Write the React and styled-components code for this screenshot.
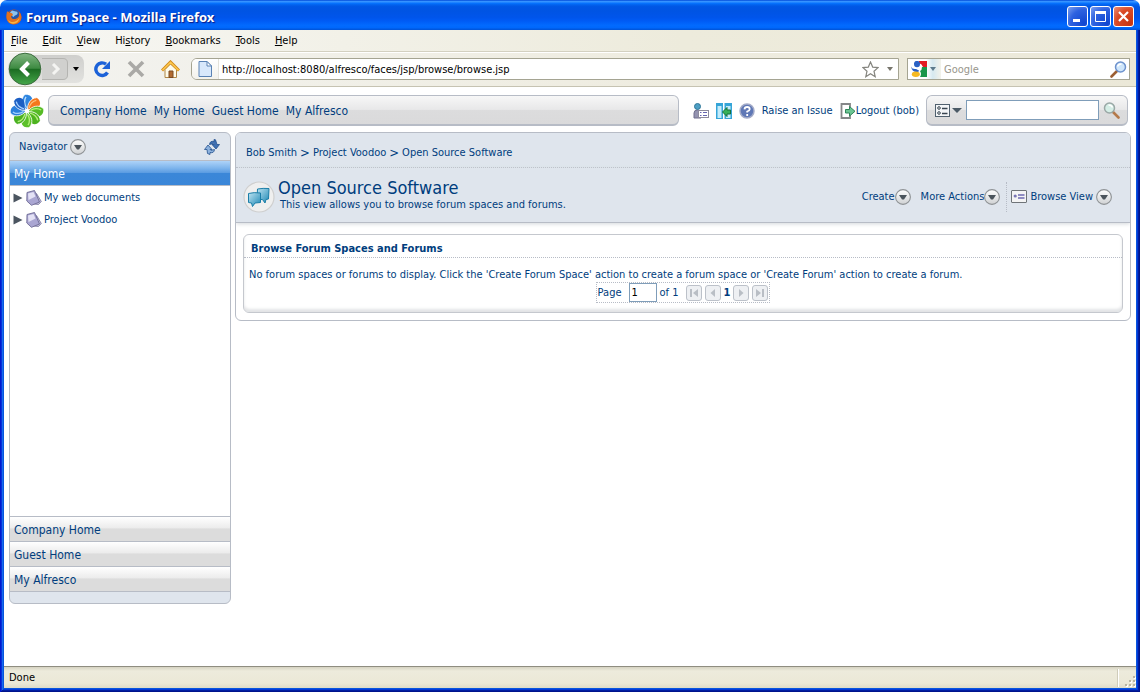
import React from "react";
import styled, { createGlobalStyle } from "styled-components";

const ui = `"DejaVu Sans Condensed", "Noto Sans", sans-serif`;
const navy = "#003d7d";
const line = "#b7bcc6";
const mist = "#dfe5ed";
const silver = "linear-gradient(#f7f7f7 0, #e8e8e9 48%, #dcdcdd 52%, #dadadb 100%)";

const GlobalStyle = createGlobalStyle`
  *, *::before, *::after { box-sizing: border-box; }
  body { margin: 0; background: #fff; font: 11px/14px ${ui}; color: #000; }
  button, input { font: inherit; color: inherit; margin: 0; padding: 0; border: 0; background: none; border-radius: 0; outline: 0; }
  a { color: inherit; text-decoration: none; }
  h1, h2, p, ul, ol { margin: 0; padding: 0; list-style: none; font-size: inherit; }
  svg { display: block; flex: none; }
`;

/* Window frame */
const Window = styled.div`
  display: flex;
  flex-direction: column;
  min-height: 100vh;
`;
const TitleBar = styled.header`
  display: flex;
  align-items: center;
  height: 30px;
  padding: 3px 6px 0 6px;
  border-radius: 7px 7px 0 0;
  background: linear-gradient(#0048d8 0, #3593ff 5%, #1a80ff 9%, #036ffc 12%, #0262ee 16%, #0057e5 22%, #0054e3 36%, #0055eb 58%, #005bf5 70%, #026afe 84%, #0068fc 92%, #0052d6 100%);
`;
const WindowTitle = styled.div`
  flex: 1;
  margin-left: 4px;
  font: bold 13px/18px "Noto Sans", sans-serif;
  color: #fff;
  text-shadow: 1px 1px 1px #0a1883;
`;
const CaptionButtons = styled.div`
  display: flex;
  gap: 2px;
`;
const CaptionButton = styled.button`
  display: grid;
  place-items: center;
  width: 21px;
  height: 21px;
  border: 1px solid #fff;
  border-radius: 3px;
  background: ${(p) =>
    p.$close
      ? "radial-gradient(circle at 85% 85%, #c83510, #da4a26 60%, #ec9078)"
      : "radial-gradient(circle at 85% 85%, #1045d0, #2e62e0 60%, #7da0f0)"};
`;
const Frame = styled.div`
  flex: 1;
  display: flex;
  flex-direction: column;
  padding: 0 4px 4px;
  background: #fff;
  box-shadow: inset 1px 0 #0019cf, inset -1px -1px #00138c, inset 2px 0 #0831d9, inset -2px -2px #001ea0,
    inset 3px 0 #166aee, inset -3px -3px #0339d8, inset 4px 0 #0855dd, inset -4px -4px #0855dd;
`;

/* Browser chrome */
const MenuBar = styled.nav`
  display: flex;
  align-items: center;
  gap: 15px;
  height: 21px;
  padding-left: 7px;
  background: linear-gradient(90deg, #f7f7f4, #edebdc 60%, #ece9d8);
`;
const MenuItem = styled.button`
  line-height: 16px;
`;
const Toolbar = styled.div`
  display: flex;
  align-items: center;
  height: 36px;
  padding: 0 6px 0 4px;
  border-top: 1px solid #d3d0c0;
  border-bottom: 1px solid #c6c3b2;
  box-shadow: inset 0 1px #fff;
  background: linear-gradient(90deg, #f3f3f0, #efedE2 50%, #ebe8d8);
`;
const HistoryButtons = styled.div`
  display: flex;
  align-items: center;
  height: 28px;
  width: 76px;
  border-radius: 14px 8px 8px 14px;
  background: linear-gradient(#cfcfcd, #e2e2df);
`;
const IconButton = styled.button`
  display: grid;
  place-items: center;
  width: ${(p) => p.$w || 34}px;
  height: ${(p) => p.$h || 28}px;
`;
const LocationBar = styled.div`
  flex: 1;
  display: flex;
  align-items: center;
  height: 22px;
  margin: 0 8px 0 3px;
  border: 1px solid #a5a492;
  border-radius: 6px 0 0 6px;
  background: #fff;
`;
const SiteButton = styled.button`
  display: grid;
  place-items: center;
  width: 27px;
  height: 20px;
  border-right: 1px solid #e3e2da;
  border-radius: 5px 0 0 5px;
  background: linear-gradient(#fff, #f3f2ec);
`;
const TextField = styled.input`
  flex: 1;
  min-width: 0;
  padding: 2px 0 0 3px;
  line-height: 16px;
  &::placeholder { color: #98968c; opacity: 1; }
`;
const WebSearch = styled.div`
  display: flex;
  align-items: center;
  width: 223px;
  height: 22px;
  padding-right: 1px;
  border: 1px solid #a5a492;
  background: #fff;
`;
const EngineButton = styled.button`
  display: flex;
  align-items: center;
  gap: 3px;
  width: 33px;
  height: 20px;
  padding-left: 3px;
  background: linear-gradient(90deg, #fff 55%, #d6e9f0 75%, #f3f2ea);
`;
const StatusBar = styled.footer`
  display: flex;
  align-items: center;
  height: 22px;
  padding-left: 5px;
  border-top: 1px solid #8f8d80;
  background: linear-gradient(#d6d3c2 0, #edebdc 4px, #ebe8d7 16px, #dedbc8 100%);
`;
const StatusText = styled.span`
  flex: 1;
`;
const StatusGrip = styled.div`
  display: flex;
  align-items: flex-end;
  justify-content: flex-end;
  width: 18px;
  height: 18px;
  border-left: 1px solid #fff;
  box-shadow: -1px 0 #cfccba;
`;

/* Application */
const Page = styled.div`
  flex: 1;
  padding: 7px 5px 16px;
  color: ${navy};
`;
const TopRow = styled.div`
  display: flex;
  align-items: center;
  height: 33px;
  margin-bottom: 5px;
  padding: 0 3px 0 1px;
`;
const SilverBox = styled.div`
  display: flex;
  align-items: center;
  height: 31px;
  border: 1px solid ${line};
  border-bottom-width: 2px;
  border-radius: 6px;
  background: ${silver};
`;
const SiteNav = styled(SilverBox).attrs({ as: "nav" })`
  flex: 1;
  gap: 7px;
  margin-left: 4px;
  padding: 2px 0 0 11px;
  font-size: 12px;
`;
const Tools = styled.div`
  display: flex;
  align-items: center;
  gap: 7px;
  margin: 0 7px 0 14px;
`;
const IconLink = styled.a`
  display: flex;
  align-items: center;
  gap: ${(p) => p.$gap || 0}px;
`;
const SiteSearch = styled(SilverBox).attrs({ as: "form" })`
  gap: 4px;
  width: 202px;
  padding: 0 7px 0 8px;
`;
const SearchInput = styled.input`
  flex: 1;
  min-width: 0;
  height: 20px;
  padding: 0 3px;
  border: 1px solid #7f9db9;
  background: #fff;
`;
const PlainButton = styled.button`
  display: flex;
  align-items: center;
  gap: ${(p) => p.$gap || 0}px;
`;
const Columns = styled.div`
  display: flex;
  align-items: flex-start;
  gap: 4px;
`;

const Sidebar = styled.aside`
  width: 222px;
  border: 1px solid ${line};
  border-radius: 6px;
  overflow: hidden;
  background: ${mist};
`;
const SidebarHead = styled.div`
  display: flex;
  align-items: center;
  justify-content: space-between;
  height: 27px;
  padding: 0 10px 0 9px;
`;
const SectionButton = styled.button`
  display: block;
  width: 100%;
  height: 25px;
  padding: 1px 0 0 4px;
  border-top: 1px solid ${line};
  text-align: left;
  font-size: 12px;
  color: ${(p) => (p.$active ? "#fff" : navy)};
  background: ${(p) =>
    p.$active
      ? "linear-gradient(#aed3f8 0, #7db4ec 30%, #5c9de2 48%, #3b87d8 52%, #3a86d8 100%)"
      : "linear-gradient(#fff 0, #ececec 45%, #dcdcdc 50%, #dcdcdc 100%)"};
`;
const Tree = styled.ul`
  min-height: 331px;
  padding-top: 1px;
  border-top: 1px solid ${line};
  background: #fff;
`;
const TreeItem = styled.li`
  display: flex;
  align-items: center;
  gap: 3px;
  height: 22px;
  padding-left: 3px;
`;
const SidebarFoot = styled.div`
  height: 12px;
  border-top: 1px solid ${line};
`;

const Main = styled.main`
  flex: 1;
  border: 1px solid ${line};
  border-radius: 6px;
  overflow: hidden;
`;
const Crumbs = styled.nav`
  display: flex;
  align-items: center;
  gap: 3px;
  height: 35px;
  padding: 5px 10px 0;
  border-bottom: 1px dotted ${line};
  background: ${mist};
`;
const CrumbMark = styled.span`
  font-size: 13px;
`;
const ViewHead = styled.div`
  display: flex;
  align-items: center;
  height: 55px;
  padding: 3px 18px 0 7px;
  border-bottom: 1px solid ${line};
  background: ${mist};
  box-shadow: 0 1px 4px #d4d8dc;
`;
const ViewTitle = styled.div`
  flex: 1;
  margin-left: 3px;
  padding-bottom: 3px;
`;
const Heading = styled.h1`
  font-size: 18px;
  line-height: 20px;
  font-weight: normal;
`;
const Lead = styled.p`
  padding-left: 2px;
`;
const Actions = styled.div`
  display: flex;
  align-items: center;
  gap: 10px;
`;
const ViewSwitch = styled.div`
  display: flex;
  align-items: center;
  height: 30px;
  margin-left: -4px;
  padding-left: 4px;
  border-left: 1px dotted ${line};
`;
const Card = styled.section`
  margin: 11px 7px 7px;
  border: 1px solid #c5c8ce;
  border-radius: 6px;
  box-shadow: inset 0 -3px 3px #e2e4e6;
`;
const CardTitle = styled.h2`
  height: 23px;
  padding: 0 7px;
  border-bottom: 1px dotted ${line};
  line-height: 27px;
`;
const CardBody = styled.div`
  display: flex;
  flex-direction: column;
  align-items: center;
  padding: 10px 5px 9px;
`;
const Message = styled.p`
  align-self: stretch;
`;
const Pager = styled.div`
  display: flex;
  align-items: center;
  gap: 3px;
  height: 21px;
  padding: 0 1px;
  border: 1px dotted ${line};
`;
const PageLabel = styled.label`
  display: flex;
  align-items: center;
  gap: 7px;
`;
const PageInput = styled.input`
  width: 28px;
  height: 19px;
  padding: 0 2px;
  border: 1px solid #7f9db9;
  background: #fff;
  color: #000;
`;
const Pages = styled.span`
  margin-right: 4px;
`;
const PageButton = styled.button`
  display: grid;
  place-items: center;
  width: 16px;
  height: 16px;
  border: 1px solid #bcc1c9;
  border-radius: 3px;
  background: #eef0f3;
`;

/* Icons */
const Icon = ({ s = 16, w, h, children }) => (
  <svg width={w || s} height={h || s} viewBox={`0 0 ${w || s} ${h || s}`} aria-hidden="true">{children}</svg>
);
const FirefoxIcon = () => (
  <Icon>
    <circle cx="8" cy="8" r="7.5" fill="#c9501a" />
    <circle cx="8.400" cy="6.600" r="5.800" fill="#2456a8" />
    <path d="M6 1.500c2 0 2 1 4 1s2 2 1 3-3 1-3 2-2 0-2-1-2-1-2-3z" fill="#8dc3ee" />
    <path d="M1 2.500c1 0 2 .5 2.500 1.500C5 3.500 6.500 4.500 7 6L5 7.500C5.500 10.500 9 11 12 8.500c1-1 1.500-3 1-5.500C15.500 5 16.500 9.500 13.500 13 9 17 2 15.500.7 10 .2 7 .4 5 1 2.500z" fill="#e2711f" />
    <path d="M2 11c3 3 8 3 11.500-2C13 13 9 15.500 6 14.500 4 14 2.600 12.500 2 11z" fill="#f8b440" />
  </Icon>
);
const BackIcon = () => (
  <Icon s={34}>
    <defs>
      <linearGradient id="back" x1="0" y1="0" x2="0" y2="1">
        <stop offset="0" stopColor="#83b783" /><stop offset=".48" stopColor="#3d8a41" />
        <stop offset=".5" stopColor="#1b6b22" /><stop offset="1" stopColor="#46a84a" />
      </linearGradient>
    </defs>
    <circle cx="17" cy="17" r="15.800" fill="url(#back)" stroke="#3c6c3e" />
    <path d="M20.500 10.500L14 17l6.500 6.500" fill="none" stroke="#fff" strokeWidth="4" />
  </Icon>
);
const ForwardIcon = () => (
  <Icon w={26} h={22}>
    <path d="M0 .5H21Q25.500 .5 25.500 5V17Q25.500 21.500 21 21.500H0" fill="#d0d0ce" stroke="#b4b4b1" />
    <path d="M11 6l5 5-5 5" fill="none" stroke="#f4f4f2" strokeWidth="3" />
  </Icon>
);
const Caret = ({ w = 7, h = 4, color = "#000" }) => (
  <Icon w={w} h={h}><path d={`M0 0H${w}L${w / 2} ${h}z`} fill={color} /></Icon>
);
const ReloadIcon = () => (
  <Icon s={18}>
    <path d="M14.500 12.500A6.300 6.300 0 1 1 13 4.200" fill="none" stroke="#1c62d8" strokeWidth="3.400" />
    <path d="M17 1v8H9z" fill="#1c62d8" />
  </Icon>
);
const StopIcon = () => (
  <Icon s={18}><path d="M2 2l14 14M16 2L2 16" stroke="#aaa9a6" strokeWidth="3.600" /></Icon>
);
const HomeIcon = () => (
  <Icon s={19}>
    <path d="M4 9.500V17.500H15.500V9.500L9.500 4z" fill="#fffbe9" stroke="#b08748" />
    <path d="M8 11h4v6.500H8z" fill="#b26a30" stroke="#7b4a22" />
    <path d="M1 10.500L9.500 2 18 10.500" fill="none" stroke="#d18a1d" strokeWidth="3" />
    <path d="M1.500 10.300L9.500 2.300l8 8" fill="none" stroke="#fdc84c" strokeWidth="1.500" />
  </Icon>
);
const DocIcon = () => (
  <Icon w={14} h={16}>
    <path d="M1 .5H9L13.500 5V15.500H1z" fill="#d8e8fb" stroke="#5a82b4" />
    <path d="M9 .5V5h4.500z" fill="#fff" stroke="#5a82b4" />
  </Icon>
);
const StarIcon = () => (
  <Icon s={17}>
    <path d="M8.500 1l2.200 5.100 5.300.5-4 3.600 1.200 5.500-4.700-2.900-4.700 2.900L5 10.200 1 6.600l5.300-.5z" fill="#fff" stroke="#85857f" strokeWidth="1.200" />
  </Icon>
);
const GoogleIcon = () => (
  <Icon>
    <path d="M8 0h8v6h-4q-1-3-4-4z" fill="#e31b23" />
    <path d="M11 6h5v10H9q2-3 0-6 2-1 2-4z" fill="#19964b" />
    <ellipse cx="6" cy="3" rx="3" ry="3.200" fill="#2b61c4" />
    <path d="M0 5.500q1 3 5 2.500l3 1.500q0 1.500-3 1.500-4-.5-5-5.500z" fill="#2b61c4" />
    <ellipse cx="4.800" cy="13.300" rx="4" ry="2.700" fill="#f6b921" />
  </Icon>
);
const LensIcon = ({ flip }) => (
  <Icon s={17}>
    <g transform={flip ? "translate(17 0) scale(-1 1)" : undefined}>
      <path d="M7 10L1.500 15.500" stroke={flip ? "#b4794a" : "#9c5f33"} strokeWidth="2.600" strokeLinecap="round" />
      <circle cx="10.500" cy="6" r="5" fill={flip ? "#d5eee6" : "#cfe6fb"} stroke={flip ? "#9aa8a6" : "#6d92cd"} strokeWidth="1.500" />
      <path d="M7.500 5.500q1-2.500 4-2.500" fill="none" stroke="#fff" strokeWidth="1.500" />
    </g>
  </Icon>
);
const petals = [
  ["#2f86e0", "#bfe0ff"], ["#f5761c", "#ffc27a"], ["#56bb25", "#b5f07a"], ["#4db31f", "#b5f07a"],
  ["#5cc12a", "#b5f07a"], ["#4ab022", "#b5f07a"], ["#2b7fdc", "#a5d2ff"], ["#1c5fc4", "#a5d2ff"],
];
const LogoIcon = () => (
  <Icon s={34}>
    {petals.map(([fill, vein], i) => (
      <g key={i} transform={`rotate(${i * 45 - 4} 17 17)`}>
        <path d="M17 15.500C12.500 12.500 11.200 4.500 15.500 .8 20.500-.2 24.500 3.600 22.600 7.800 21.400 10.600 18.200 11.500 17 15.500z" fill={fill} />
        <path d="M16.800 13.500C14.500 10 14.800 5.500 17 2.800" fill="none" stroke={vein} strokeWidth="1.300" />
        <path d="M17 15.500C12.500 12.500 11.200 4.500 15.500 .8" fill="none" stroke="#fff" strokeWidth=".8" />
      </g>
    ))}
    <circle cx="17" cy="17" r="2.200" fill="#fff" />
  </Icon>
);
const UserIcon = () => (
  <Icon>
    <path d="M1 15V10Q1 7 4.500 7T8 10v5z" fill="#9493b0" stroke="#706f8e" />
    <circle cx="4.500" cy="3.500" r="3" fill="#4d9fc4" stroke="#2f7698" />
    <rect x="5.500" y="7.500" width="10" height="7" fill="#fff" stroke="#8d8a9c" />
    <path d="M7 9.500h1.500M10 9.500h4M7 12.500h1.500M10 12.500h4" stroke="#6664b0" />
  </Icon>
);
const ShelfIcon = () => (
  <Icon>
    <path d="M0 0h7v16H0zM8.500 0H16v16H8.500z" fill="#35a5d8" />
    <path d="M1.500 3H5.500V15H1.500zM10 3h4.500v12H10z" fill="#c4ecfb" />
    <path d="M6.500 9l4.500-4.500V7h3.500v4H11v2.500z" fill="#35b05a" stroke="#15713a" />
  </Icon>
);
const HelpIcon = () => (
  <Icon>
    <circle cx="8" cy="8" r="7" fill="#5f78b6" stroke="#a3abc8" strokeWidth="1.500" />
    <path d="M5.500 6.300Q5.700 4 8.200 4T10.700 6.200Q10.700 7.500 8.200 8.500V9.600M8.200 11v2" fill="none" stroke="#fff" strokeWidth="1.800" />
  </Icon>
);
const LogoutIcon = () => (
  <Icon>
    <path d="M10 4V1H1.500V15H10V12" fill="none" stroke="#858788" strokeWidth="1.800" />
    <path d="M5.500 6.500h4V3.500L15 8.300 9.500 13v-3h-4z" fill="#6cc593" stroke="#2f8558" />
  </Icon>
);
const OptionsIcon = () => (
  <Icon w={15} h={13}>
    <rect x=".5" y=".5" width="14" height="12" fill="#f3f5f7" stroke="#50606e" />
    <circle cx="4" cy="4" r="1.300" fill="none" stroke="#38444f" /><circle cx="4" cy="9" r="1.300" fill="none" stroke="#38444f" />
    <path d="M7 4.500h5.500M7 9.500h5.500" stroke="#38444f" strokeWidth="1.400" />
  </Icon>
);
const DropIcon = () => (
  <Icon>
    <defs>
      <linearGradient id="drop" x1="0" y1="0" x2="0" y2="1">
        <stop offset="0" stopColor="#fff" /><stop offset="1" stopColor="#cfd1d3" />
      </linearGradient>
    </defs>
    <circle cx="8" cy="8" r="7.400" fill="url(#drop)" stroke="#8e9295" strokeWidth="1.100" />
    <path d="M4 6h8L9 10.500H7z" fill="#4b545c" />
  </Icon>
);
const RefreshIcon = () => (
  <Icon>
    <path d="M5.500 5.500Q6 1.500 10 2.500V.5L11.500 .8 13 5.500H15.500L12 10 8 5.500H10Q9.500 4 7.500 5z" fill="#3f70b2" stroke="#23518e" strokeWidth=".8" />
    <path d="M10.500 10.500Q10 14.500 6 13.500V15.500L3.500 14.500 3 10.500H.5L4 6 8 10.500H6Q6.500 12 8.500 11z" fill="#8db2de" stroke="#23518e" strokeWidth=".8" />
  </Icon>
);
const ExpandIcon = () => (
  <Icon w={10} h={10}><path d="M.5 .5L9.500 5 .5 9.500z" fill="#4b5560" /></Icon>
);
const SpaceIcon = () => (
  <Icon>
    <path d="M10.500 3.500L15.300 11.500 12.500 14.500 8 14z" fill="#c3c0de" stroke="#77749c" strokeWidth=".8" />
    <path d="M1 2.500L8.500 .5 13.500 12 5.500 15.300 .8 11z" fill="#aaa6d2" stroke="#6d6a94" strokeWidth=".9" />
    <path d="M2 3.500L7.500 2 9.500 6.500 2.500 10z" fill="#e4e2f5" />
  </Icon>
);
const ForumIcon = () => (
  <Icon s={32}>
    <defs>
      <linearGradient id="bubble" x1="0" y1="0" x2="1" y2="1">
        <stop offset="0" stopColor="#bfe4f2" /><stop offset="1" stopColor="#1c87b4" />
      </linearGradient>
    </defs>
    <circle cx="16" cy="16" r="15" fill="#efefef" stroke="#cfcfcf" strokeWidth="1.200" />
    <path d="M14.500 8Q20 7 26 7.500L25.500 18 23 18.500 22 22 19.500 18.500H14z" fill="url(#bubble)" stroke="#1b7ea8" />
    <path d="M5.500 12.500Q11 11 17.500 12V21.500L12 22 9.500 25.500 8.500 22 5.500 21.500z" fill="url(#bubble)" stroke="#1b7ea8" />
  </Icon>
);
const CardViewIcon = () => (
  <Icon w={16} h={13}>
    <rect x=".5" y=".5" width="15" height="12" rx=".5" fill="#f4f4f4" stroke="#6f7478" />
    <circle cx="4.200" cy="6" r="1.600" fill="#7a76b4" />
    <path d="M7 5h6.500M7 8h6.500" stroke="#6d69b0" strokeWidth="1.600" />
  </Icon>
);
const pagerShapes = {
  first: "M1 1h2v8H1zM9 1v8L4 5z",
  prev: "M7 1v8L2.500 5z",
  next: "M3 1v8l4.500-4z",
  last: "M1 1v8l5-4zM7 1h2v8H7z",
};
const PagerIcon = ({ kind }) => (
  <Icon s={10}><path d={pagerShapes[kind]} fill="#b9bec5" /></Icon>
);
const GripIcon = () => (
  <Icon s={12}>
    {[[9, 1], [5, 5], [9, 5], [1, 9], [5, 9], [9, 9]].map(([x, y]) => (
      <g key={`${x}-${y}`}>
        <rect x={x + 1} y={y + 1} width="2" height="2" fill="#fff" />
        <rect x={x} y={y} width="2" height="2" fill="#b8b4a2" />
      </g>
    ))}
  </Icon>
);

const menus = [["", "F", "ile"], ["", "E", "dit"], ["", "V", "iew"], ["Hi", "s", "tory"], ["", "B", "ookmarks"], ["", "T", "ools"], ["", "H", "elp"]];
const places = ["Company Home", "My Home", "Guest Home", "My Alfresco"];
const crumbs = ["Bob Smith", "Project Voodoo", "Open Source Software"];

export default function App() {
  return (
    <Window>
      <GlobalStyle />
      <TitleBar>
        <FirefoxIcon />
        <WindowTitle>Forum Space - Mozilla Firefox</WindowTitle>
        <CaptionButtons>
          <CaptionButton aria-label="Minimize">
            <Icon s={15}><path d="M3 10h7v3H3z" fill="#fff" /></Icon>
          </CaptionButton>
          <CaptionButton aria-label="Maximize">
            <Icon s={15}><path d="M2.500 3.500h10v9h-10z" fill="none" stroke="#fff" /><path d="M2 2h11v3H2z" fill="#fff" /></Icon>
          </CaptionButton>
          <CaptionButton $close aria-label="Close">
            <Icon s={15}><path d="M3 3l9 9M12 3l-9 9" stroke="#fff" strokeWidth="2.200" /></Icon>
          </CaptionButton>
        </CaptionButtons>
      </TitleBar>
      <Frame>
        <MenuBar>
          {menus.map(([pre, key, post]) => (
            <MenuItem key={post}>{pre}<u>{key}</u>{post}</MenuItem>
          ))}
        </MenuBar>
        <Toolbar>
          <HistoryButtons>
            <IconButton $w={34} $h={34} aria-label="Back"><BackIcon /></IconButton>
            <IconButton $w={26} aria-label="Forward"><ForwardIcon /></IconButton>
            <IconButton $w={15} aria-label="Recent pages"><Caret w={6} /></IconButton>
          </HistoryButtons>
          <IconButton $w={36} aria-label="Reload"><ReloadIcon /></IconButton>
          <IconButton $w={32} aria-label="Stop"><StopIcon /></IconButton>
          <IconButton $w={36} aria-label="Home"><HomeIcon /></IconButton>
          <LocationBar>
            <SiteButton aria-label="Site information"><DocIcon /></SiteButton>
            <TextField aria-label="Location" defaultValue="http://localhost:8080/alfresco/faces/jsp/browse/browse.jsp" />
            <IconButton $w={24} $h={20} aria-label="Bookmark this page"><StarIcon /></IconButton>
            <IconButton $w={16} $h={20} aria-label="Location history"><Caret w={6} color="#77756c" /></IconButton>
          </LocationBar>
          <WebSearch>
            <EngineButton aria-label="Search engine"><GoogleIcon /><Caret w={6} color="#5c7a8c" /></EngineButton>
            <TextField aria-label="Web search" placeholder="Google" />
            <IconButton $w={20} $h={20} aria-label="Search the web"><LensIcon /></IconButton>
          </WebSearch>
        </Toolbar>

        <Page>
          <TopRow>
            <LogoIcon />
            <SiteNav>
              {places.map((p) => <a href="#" key={p}>{p}</a>)}
            </SiteNav>
            <Tools>
              <IconLink href="#" aria-label="User profile"><UserIcon /></IconLink>
              <IconLink href="#" aria-label="Toggle sidebar"><ShelfIcon /></IconLink>
              <IconLink href="#" aria-label="Help"><HelpIcon /></IconLink>
              <IconLink href="#">Raise an Issue</IconLink>
              <IconLink href="#"><LogoutIcon />Logout (bob)</IconLink>
            </Tools>
            <SiteSearch>
              <PlainButton type="button" $gap={2} aria-label="Search options">
                <OptionsIcon /><Caret w={10} h={5} color="#4b5a66" />
              </PlainButton>
              <SearchInput aria-label="Search" />
              <PlainButton type="button" aria-label="Run search"><LensIcon flip /></PlainButton>
            </SiteSearch>
          </TopRow>

          <Columns>
            <Sidebar>
              <SidebarHead>
                <PlainButton $gap={3}>Navigator<DropIcon /></PlainButton>
                <PlainButton aria-label="Refresh"><RefreshIcon /></PlainButton>
              </SidebarHead>
              <SectionButton $active>My Home</SectionButton>
              <Tree>
                {["My web documents", "Project Voodoo"].map((t) => (
                  <TreeItem key={t}>
                    <PlainButton aria-label={`Expand ${t}`}><ExpandIcon /></PlainButton>
                    <IconLink href="#" $gap={2}><SpaceIcon />{t}</IconLink>
                  </TreeItem>
                ))}
              </Tree>
              <SectionButton>Company Home</SectionButton>
              <SectionButton>Guest Home</SectionButton>
              <SectionButton>My Alfresco</SectionButton>
              <SidebarFoot />
            </Sidebar>

            <Main>
              <Crumbs aria-label="Breadcrumb">
                {crumbs.map((c, i) => (
                  <React.Fragment key={c}>
                    {i > 0 && <CrumbMark>&gt;</CrumbMark>}
                    <a href="#">{c}</a>
                  </React.Fragment>
                ))}
              </Crumbs>
              <ViewHead>
                <ForumIcon />
                <ViewTitle>
                  <Heading>Open Source Software</Heading>
                  <Lead>This view allows you to browse forum spaces and forums.</Lead>
                </ViewTitle>
                <Actions>
                  <PlainButton>Create<DropIcon /></PlainButton>
                  <PlainButton>More Actions<DropIcon /></PlainButton>
                  <ViewSwitch>
                    <PlainButton $gap={3}><CardViewIcon />Browse View<DropIcon /></PlainButton>
                  </ViewSwitch>
                </Actions>
              </ViewHead>
              <Card>
                <CardTitle>Browse Forum Spaces and Forums</CardTitle>
                <CardBody>
                  <Message>
                    No forum spaces or forums to display. Click the 'Create Forum Space' action to create a forum space or 'Create Forum' action to create a forum.
                  </Message>
                  <Pager>
                    <PageLabel>Page<PageInput defaultValue="1" /></PageLabel>
                    <Pages>of 1</Pages>
                    <PageButton aria-label="First page"><PagerIcon kind="first" /></PageButton>
                    <PageButton aria-label="Previous page"><PagerIcon kind="prev" /></PageButton>
                    <b>1</b>
                    <PageButton aria-label="Next page"><PagerIcon kind="next" /></PageButton>
                    <PageButton aria-label="Last page"><PagerIcon kind="last" /></PageButton>
                  </Pager>
                </CardBody>
              </Card>
            </Main>
          </Columns>
        </Page>

        <StatusBar>
          <StatusText>Done</StatusText>
          <StatusGrip><GripIcon /></StatusGrip>
        </StatusBar>
      </Frame>
    </Window>
  );
}
